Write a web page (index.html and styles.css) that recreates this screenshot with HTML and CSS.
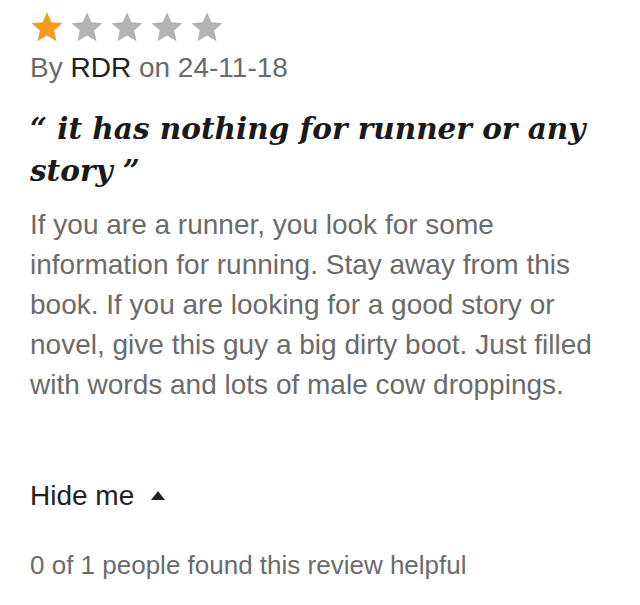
FILE: index.html
```html
<!DOCTYPE html>
<html>
<head>
<meta charset="utf-8">
<link rel="stylesheet" href="styles.css">
</head>
<body>
<div class="review">
  <div class="stars">
    <svg class="star on" viewBox="0 0 24 24"><path d="M12 1.5l3.1 7.1 7.7.7-5.8 5.1 1.7 7.6L12 18l-6.7 4 1.7-7.6-5.8-5.1 7.7-.7z"/></svg>
    <svg class="star" viewBox="0 0 24 24"><path d="M12 1.5l3.1 7.1 7.7.7-5.8 5.1 1.7 7.6L12 18l-6.7 4 1.7-7.6-5.8-5.1 7.7-.7z"/></svg>
    <svg class="star" viewBox="0 0 24 24"><path d="M12 1.5l3.1 7.1 7.7.7-5.8 5.1 1.7 7.6L12 18l-6.7 4 1.7-7.6-5.8-5.1 7.7-.7z"/></svg>
    <svg class="star" viewBox="0 0 24 24"><path d="M12 1.5l3.1 7.1 7.7.7-5.8 5.1 1.7 7.6L12 18l-6.7 4 1.7-7.6-5.8-5.1 7.7-.7z"/></svg>
    <svg class="star" viewBox="0 0 24 24"><path d="M12 1.5l3.1 7.1 7.7.7-5.8 5.1 1.7 7.6L12 18l-6.7 4 1.7-7.6-5.8-5.1 7.7-.7z"/></svg>
  </div>
  <p class="byline">By <span class="author">RDR</span> on 24-11-18</p>
  <h2 class="title">“ it has nothing for runner or any story ”</h2>
  <p class="body">If you are a runner, you look for some information for running. Stay away from this book. If you are looking for a good story or novel, give this guy a big dirty boot. Just filled with words and lots of male cow droppings.</p>
  <button class="toggle">Hide me <span class="caret"></span></button>
  <p class="helpful">0 of 1 people found this review helpful</p>
</div>
</body>
</html>
```
FILE: styles.css
```css
html, body {
  margin: 0;
  padding: 0;
  background: #fff;
}
.review {
  padding: 10px 40px 0 30px;
  font-family: "Liberation Sans", Arial, sans-serif;
  color: #6b6b6b;
}
.stars {
  display: flex;
  gap: 6px;
  height: 34px;
}
.star {
  width: 34px;
  height: 34px;
  fill: #b3b3b3;
}
.star.on {
  fill: #f39c1f;
}
.byline {
  margin: 8px 0 0 0;
  font-size: 28px;
  line-height: 32px;
}
.author {
  color: #222;
}
.title {
  margin: 24px 0 0 0;
  font-family: "DejaVu Serif", Georgia, serif;
  font-style: italic;
  font-weight: bold;
  font-size: 29.5px;
  line-height: 42px;
  color: #1a1a1a;
}
.body {
  margin: 13px 0 0 0;
  font-size: 28px;
  line-height: 40px;
}
.toggle {
  display: flex;
  align-items: center;
  gap: 17px;
  margin: 75px 0 0 0;
  padding: 0;
  border: 0;
  background: none;
  font-family: "Liberation Sans", Arial, sans-serif;
  font-size: 28px;
  line-height: 32px;
  color: #222;
}
.caret {
  width: 0;
  height: 0;
  margin-top: -2px;
  border-left: 7.5px solid transparent;
  border-right: 7.5px solid transparent;
  border-bottom: 9px solid #222;
}
.helpful {
  margin: 37px 0 0 0;
  font-size: 26px;
  line-height: 32px;
}
```
